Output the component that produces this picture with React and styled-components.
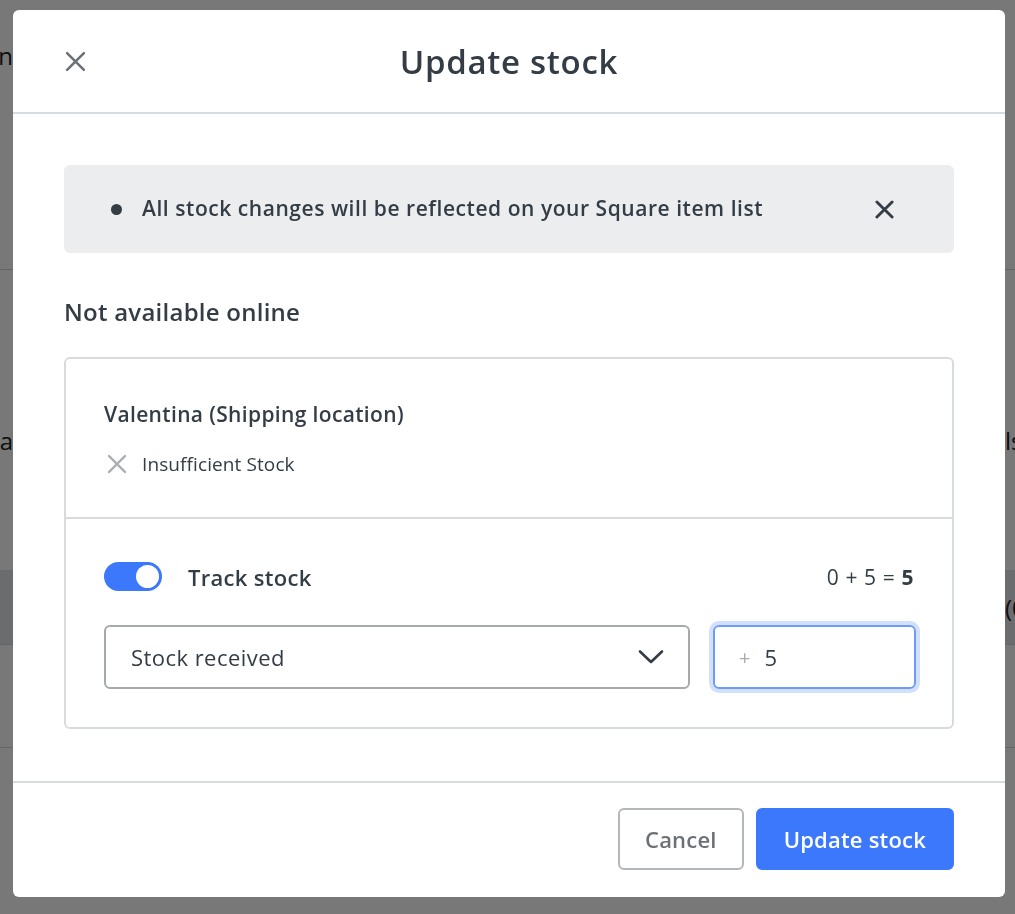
import styled, { createGlobalStyle } from 'styled-components'

const color = {
  text: '#343c45',
  muted: '#6c7178',
  light: '#a9acb0',
  border: '#d8dbde',
  field: '#a6a9ad',
  blue: '#3b78fb',
  banner: '#ebedef',
}

const GlobalStyle = createGlobalStyle`
  * { box-sizing: border-box; }
  html, body { margin: 0; padding: 0; }
  body {
    font-family: "Open Sans", "Noto Sans", sans-serif;
    color: ${color.text};
    background: #fff;
  }
`

// page behind the modal
const Page = styled.div`
  height: 914px;
  overflow: hidden;
  display: flex;
  flex-direction: column;
`

const PageRow = styled.div`
  height: ${props => props.h}px;
  padding-top: ${props => props.pt || 0}px;
  display: grid;
  grid-template-columns: 13px 1fr 10px;
  align-items: center;
  background: ${props => props.shade ? '#e4e6e9' : '#fff'};
  border-bottom: ${props => props.line ? '1px solid #d5d7da' : 'none'};
  font-size: 24px;
  color: #222;
`

const PeekLeft = styled.div`
  display: flex;
  justify-content: flex-end;
  overflow: hidden;
  white-space: nowrap;
`

const PeekRight = styled.div`
  display: flex;
  justify-content: flex-start;
  overflow: hidden;
  white-space: nowrap;
`

// modal
const Overlay = styled.div`
  position: fixed;
  inset: 0;
  background: rgba(0, 0, 0, 0.53);
  padding: 10px 10px 17px 13px;
  display: flex;
`

const Modal = styled.div`
  width: 992px;
  height: 887px;
  background: #fff;
  border-radius: 6px;
  display: flex;
  flex-direction: column;
  overflow: hidden;
`

const Header = styled.div`
  height: 104px;
  flex: none;
  border-bottom: 2px solid ${color.border};
  display: grid;
  grid-template-columns: 100px 1fr 100px;
  align-items: center;
  padding: 0 51px;
`

const Title = styled.h1`
  margin: 0;
  text-align: center;
  font-size: 33px;
  font-weight: 600;
  color: ${color.text};
  letter-spacing: 0.7px;
`

const IconButton = styled.button`
  border: none;
  background: none;
  padding: 0;
  display: flex;
  align-items: center;
  justify-content: center;
  width: ${props => props.size}px;
  height: ${props => props.size}px;
  color: ${props => props.tone};
  cursor: pointer;
`

const Body = styled.div`
  flex: 1;
  padding: 51px 51px 52px 51px;
  border-bottom: 2px solid ${color.border};
`

const Banner = styled.div`
  height: 88px;
  background: ${color.banner};
  border-radius: 6px;
  display: flex;
  align-items: center;
  padding: 0 60px 0 46px;
  font-size: 21px;
  font-weight: 600;
  letter-spacing: 0.55px;
`

const Bullet = styled.span`
  width: 11px;
  height: 11px;
  border-radius: 50%;
  background: ${color.text};
  margin: 0 20px 0 1px;
  flex: none;
`

const BannerText = styled.span`
  flex: 1;
  margin-top: -3px;
`

const SectionTitle = styled.h2`
  margin: 44px 0 30px;
  font-size: 24px;
  line-height: 30px;
  font-weight: 600;
  letter-spacing: 0.25px;
`

const Card = styled.div`
  border: 2px solid ${color.border};
  border-radius: 6px;
`

const CardSection = styled.div`
  padding: ${props => props.pad};
  border-bottom: ${props => props.divider ? `2px solid ${color.border}` : 'none'};
`

const LocationName = styled.div`
  font-size: 21px;
  line-height: 28px;
  font-weight: 600;
  letter-spacing: 0.35px;
`

const Status = styled.div`
  margin-top: 23px;
  display: flex;
  align-items: center;
  gap: 15px;
  font-size: 19px;
  line-height: 26px;
  letter-spacing: 0.1px;
  margin-left: 2px;
`

const TrackRow = styled.div`
  display: flex;
  align-items: center;
  height: 29px;
`

const Toggle = styled.span`
  width: 58px;
  height: 29px;
  border-radius: 15px;
  background: ${color.blue};
  display: flex;
  align-items: center;
  justify-content: flex-end;
  padding-right: 3px;
  flex: none;

  &::after {
    content: '';
    width: 23px;
    height: 23px;
    border-radius: 50%;
    background: #fff;
  }
`

const TrackLabel = styled.span`
  margin-left: 26px;
  font-size: 22px;
  font-weight: 600;
  letter-spacing: 0.3px;
  flex: 1;
`

const Sum = styled.span`
  font-size: 21px;
  letter-spacing: 0.6px;

  & b { font-weight: 700; }
`

const Fields = styled.div`
  margin-top: 34px;
  display: flex;
  gap: 23px;
`

const Select = styled.div`
  flex: 1;
  height: 64px;
  border: 2px solid ${color.field};
  border-radius: 6px;
  display: flex;
  align-items: center;
  justify-content: space-between;
  padding: 0 24px 0 25px;
  font-size: 22px;
  letter-spacing: 0.45px;
`

const Qty = styled.div`
  width: 203px;
  height: 64px;
  border: 2px solid #6d9cf7;
  border-radius: 6px;
  box-shadow: 0 0 0 4px #d3e0fd;
  display: flex;
  align-items: center;
  padding-left: 24px;
  gap: 14px;
  font-size: 22px;
  margin-right: -2px;
`

const Plus = styled.span`
  color: ${color.light};
  font-size: 20px;
`

const Footer = styled.div`
  height: 116px;
  flex: none;
  display: flex;
  justify-content: flex-end;
  align-items: flex-start;
  gap: 12px;
  padding: 25px 51px 0 0;
`

const Button = styled.button`
  height: 62px;
  padding: 0 ${props => props.primary ? '26px' : '25px'};
  border-radius: 6px;
  font-family: inherit;
  font-size: 22px;
  font-weight: 600;
  letter-spacing: 0.2px;
  border: 2px solid ${props => props.primary ? color.blue : '#b3b6ba'};
  background: ${props => props.primary ? color.blue : '#fff'};
  color: ${props => props.primary ? '#fff' : color.muted};
  cursor: pointer;
`

const Cross = ({ size, stroke }) => (
  <svg width={size} height={size} viewBox="0 0 20 20" fill="none">
    <path d="M2 2L18 18M18 2L2 18" stroke="currentColor" strokeWidth={stroke} strokeLinecap="round" />
  </svg>
)

const Chevron = () => (
  <svg width="26" height="16" viewBox="0 0 26 16" fill="none">
    <path d="M2 2.5L13 13L24 2.5" stroke={color.text} strokeWidth="2.6" strokeLinecap="round" strokeLinejoin="round" />
  </svg>
)

export default function App() {
  return (
    <>
      <GlobalStyle />
      <Page>
        <PageRow h={110}><PeekLeft>Location</PeekLeft><span /><PeekRight /></PageRow>
        <PageRow h={160} line><PeekLeft /><span /><PeekRight /></PageRow>
        <PageRow h={300} pt={40}><PeekLeft>Varia</PeekLeft><span /><PeekRight>ls:</PeekRight></PageRow>
        <PageRow h={75} shade line><PeekLeft /><span /><PeekRight>(0)</PeekRight></PageRow>
        <PageRow h={103} line><PeekLeft /><span /><PeekRight /></PageRow>
        <PageRow h={166}><PeekLeft /><span /><PeekRight /></PageRow>
      </Page>
      <Overlay>
        <Modal>
          <Header>
            <IconButton size={22} tone={color.muted} aria-label="Close">
              <Cross size={21} stroke={2.4} />
            </IconButton>
            <Title>Update stock</Title>
            <span />
          </Header>
          <Body>
            <Banner>
              <Bullet />
              <BannerText>All stock changes will be reflected on your Square item list</BannerText>
              <IconButton size={20} tone={color.text} aria-label="Dismiss">
                <Cross size={19} stroke={3} />
              </IconButton>
            </Banner>
            <SectionTitle>Not available online</SectionTitle>
            <Card>
              <CardSection pad="41px 38px 40px" divider>
                <LocationName>Valentina (Shipping location)</LocationName>
                <Status>
                  <IconButton as="span" size={21} tone={color.light}>
                    <Cross size={20} stroke={2.4} />
                  </IconButton>
                  Insufficient Stock
                </Status>
              </CardSection>
              <CardSection pad="43px 38px 38px">
                <TrackRow>
                  <Toggle />
                  <TrackLabel>Track stock</TrackLabel>
                  <Sum>0 + 5 = <b>5</b></Sum>
                </TrackRow>
                <Fields>
                  <Select>
                    Stock received
                    <Chevron />
                  </Select>
                  <Qty>
                    <Plus>+</Plus>
                    5
                  </Qty>
                </Fields>
              </CardSection>
            </Card>
          </Body>
          <Footer>
            <Button>Cancel</Button>
            <Button primary>Update stock</Button>
          </Footer>
        </Modal>
      </Overlay>
    </>
  )
}
